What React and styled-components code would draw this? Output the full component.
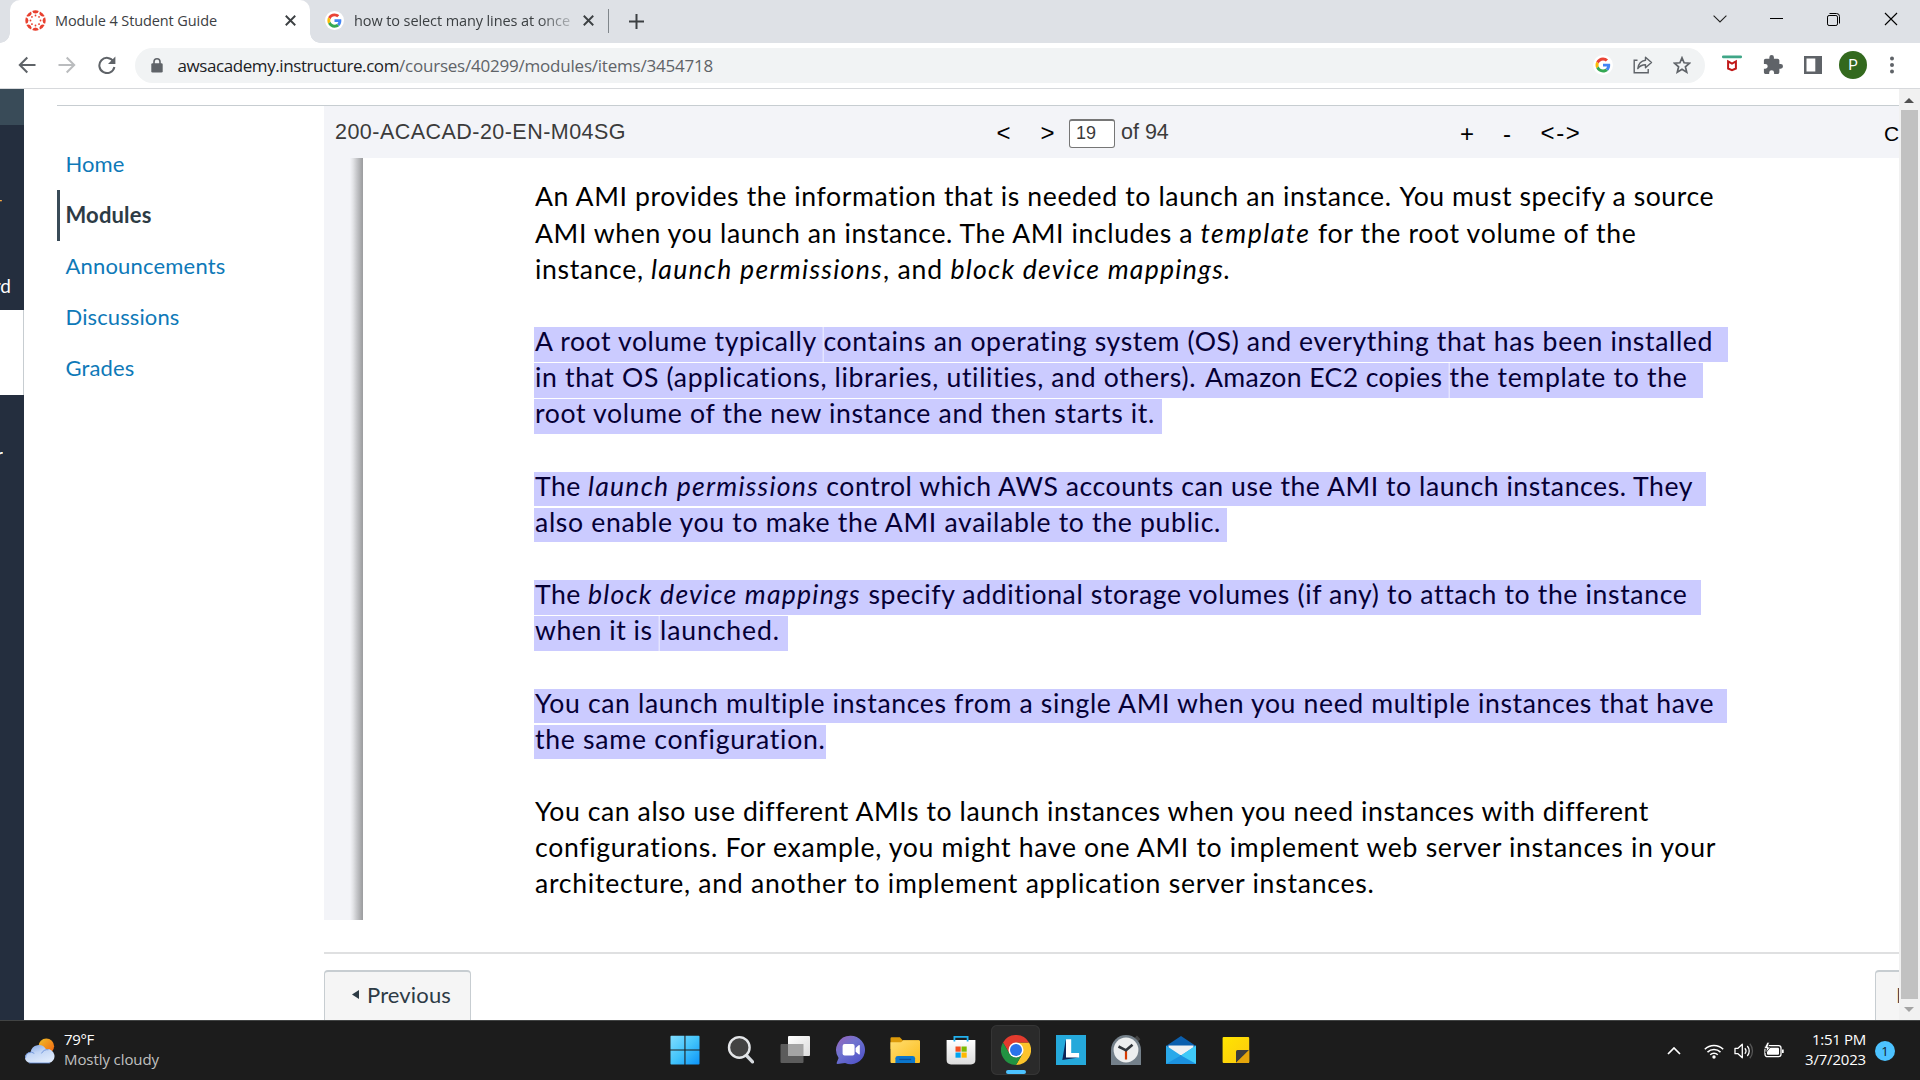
import React, { useLayoutEffect, useRef, useState } from "react";
import styled, { createGlobalStyle, css } from "styled-components";

const Global = createGlobalStyle`
  html, body { margin: 0; padding: 0; background: #fff; overflow: hidden; }
  *, *::before, *::after { box-sizing: border-box; }
  svg { display: block; flex: none; }
`;

const ui = `"Open Sans", "Noto Sans", sans-serif`;
const lato = `Lato, "Noto Sans", sans-serif`;
const arial = `"Liberation Sans", Arial, sans-serif`;

/* ---------- text tracked out to a known width ---------- */
const FitBox = styled.span`
  display: inline-block;
  flex: none;
  white-space: pre;
  width: ${(p) => p.$w}px;
`;

function Fit({ w, children }) {
  const ref = useRef(null);
  const [track, setTrack] = useState(0);
  useLayoutEffect(() => {
    const natural = ref.current.getBoundingClientRect().width;
    setTrack((w - natural) / children.length);
  }, [w, children]);
  return (
    <FitBox $w={w}>
      <span ref={ref} style={{ letterSpacing: track + "px" }}>{children}</span>
    </FitBox>
  );
}

/* ---------- shell ---------- */
const Screen = styled.div`
  width: 1920px;
  height: 1080px;
  display: grid;
  grid-template-rows: 43px 46px 931px 60px;
  overflow: hidden;
  background: #fff;
  font-family: ${ui};
`;

/* ---------- tab strip ---------- */
const TabStrip = styled.header`
  display: flex;
  background: #dee1e6;
  padding-left: 10px;
`;
const Tab = styled.div`
  display: flex;
  align-items: center;
  flex: none;
  width: ${(p) => p.$w}px;
  height: 43px;
  padding: 0 14px 2px 15px;
  background: ${(p) => (p.$active ? "#fff" : "transparent")};
  border-radius: 10px 10px 0 0;
  position: relative;
  ${(p) => p.$active && css`
    &::before, &::after {
      content: "";
      position: absolute;
      bottom: 0;
      width: 10px;
      height: 10px;
    }
    &::before { left: -10px; background: radial-gradient(circle at 0 0, transparent 9.5px, #fff 10px); }
    &::after { right: -10px; background: radial-gradient(circle at 100% 0, transparent 9.5px, #fff 10px); }
  `}
`;
const TabTitle = styled.span`
  flex: 1;
  margin-left: ${(p) => p.$gap}px;
  overflow: hidden;
  font-size: 14.5px;
  line-height: 20px;
  color: #3c4043;
  white-space: nowrap;
  ${(p) => p.$fade && css`
    flex: none;
    width: 217px;
    margin-right: 12px;
    mask-image: linear-gradient(90deg, #000 85%, rgba(0,0,0,0.25));
  `}
`;
const TabDivider = styled.div`
  width: 1px;
  height: 24px;
  margin: 9px 20px 0 0;
  background: #80868b;
`;
const NewTab = styled.div`
  display: flex;
  align-items: center;
  height: 42px;
`;
const WindowControls = styled.div`
  display: flex;
  align-items: center;
  height: 38px;
  margin-left: auto;
  padding-right: 1px;
`;
const Control = styled.div`
  display: flex;
  justify-content: center;
  width: ${(p) => p.$w}px;
`;

/* ---------- address bar ---------- */
const Toolbar = styled.div`
  display: flex;
  align-items: center;
  background: #fff;
  border-bottom: 1px solid #d7d9dc;
  padding: 0 0 1px 18px;
`;
const NavButtons = styled.div`
  display: flex;
  gap: 22px;
  width: 117px;
`;
const Omnibox = styled.div`
  display: flex;
  align-items: center;
  flex: none;
  width: 1570px;
  height: 35px;
  padding: 0 14px 0 16px;
  border-radius: 18px;
  background: #f1f3f4;
`;
const Url = styled.div`
  flex: 1;
  display: flex;
  margin-left: 14.5px;
  padding-top: 1px;
  font-size: 17px;
  line-height: 22px;
  color: #202124;
`;
const UrlPath = styled.span`
  color: #5f6368;
`;
const OmniActions = styled.div`
  display: flex;
  align-items: center;
  gap: 20px;
`;
const Extensions = styled.div`
  display: flex;
  align-items: center;
  gap: 21px;
  padding-left: 17px;
`;
const Avatar = styled.div`
  width: 28px;
  height: 28px;
  margin: 0 2px 0 -4px;
  border-radius: 50%;
  background: #33691e;
  color: #fff;
  font: 400 15px/28px Roboto, sans-serif;
  text-align: center;
`;

/* ---------- page ---------- */
const Page = styled.main`
  display: flex;
  overflow: hidden;
`;
const GlobalNav = styled.aside`
  display: flex;
  flex-direction: column;
  width: 24px;
  background: #242e3e;
  overflow: hidden;
`;
const NavLogo = styled.div`
  height: 36px;
  background: #394b58;
`;
const NavSlot = styled.div`
  display: flex;
  justify-content: flex-end;
  width: ${(p) => p.$w}px;
  height: ${(p) => p.$h}px;
  padding-top: ${(p) => p.$top}px;
  overflow: hidden;
  color: ${(p) => p.$color || "#fff"};
  font: 400 19px/24px ${lato};
  white-space: nowrap;
`;
const NavCurrent = styled.div`
  height: 85px;
  background: #fff;
  border-right: 1px solid #c7cdd1;
`;
const Content = styled.div`
  display: flex;
  flex: none;
  width: 1842px;
  margin: 16px 0 0 33px;
  border-top: 1px solid #c7cdd1;
  overflow: hidden;
`;
const CourseMenu = styled.nav`
  display: flex;
  flex-direction: column;
  width: 267px;
  flex: none;
  padding-top: 33px;
`;
const CourseLink = styled.a`
  display: flex;
  align-items: center;
  height: 51px;
  padding: 0 0 2px ${(p) => (p.$active ? 5.5 : 8.5)}px;
  border-left: ${(p) => (p.$active ? "3px solid #394b58" : "0")};
  color: ${(p) => (p.$active ? "#2d3b45" : "#0e79b8")};
  font: ${(p) => (p.$active ? 700 : 400)} 22px/30px ${lato};
`;
const Viewer = styled.section`
  display: flex;
  flex-direction: column;
  width: 1575px;
  flex: none;
`;
const ViewerBar = styled.div`
  display: flex;
  align-items: center;
  flex: none;
  height: 52px;
  padding: 0 0 0 11px;
  background: #f3f4f8;
  color: #3b3b3b;
  font: 400 21.5px/28px ${arial};
  overflow: hidden;
`;
const DocName = styled.div`
  flex: none;
  width: 661.5px;
  padding-bottom: 1px;
`;
const BarKey = styled.button`
  flex: none;
  width: ${(p) => p.$w}px;
  padding: ${(p) => p.$down || 0}px 0 0;
  border: 0;
  background: none;
  color: #000;
  font: 400 ${(p) => p.$size || 24}px/28px ${arial};
  text-align: left;
  white-space: nowrap;
`;
const PageInput = styled.div`
  flex: none;
  width: 46px;
  height: 29px;
  margin: 3px 6px 0 0;
  padding: 0 0 0 6px;
  border: 1px solid #767676;
  border-top-width: 2px;
  border-radius: 3px;
  background: #fff;
  font: 400 18px/24px ${arial};
`;
const PageCount = styled.div`
  flex: none;
  width: 339px;
  padding-bottom: 1px;
`;
const Sheet = styled.div`
  display: flex;
  flex: none;
  height: 762px;
`;
const SheetGutter = styled.div`
  width: 39px;
  flex: none;
  background: linear-gradient(90deg, #f3f4f8 26px, #e3e4e7 29px, #c4c5c8 33px, #a0a1a3 38px, #9c9da0);
`;
const Lines = styled.div`
  display: flex;
  flex-direction: column;
  padding: 24.4px 0 0 172px;
  font: 400 26.6px/36.16px ${lato};
  color: #000;
`;
const Line = styled.div`
  display: flex;
  height: 36.16px;
  flex: none;
`;
const Segment = styled.span`
  display: block;
  flex: none;
  height: 34.5px;
  line-height: 29.5px;
  font-style: ${(p) => (p.$italic ? "italic" : "normal")};
  ${(p) => p.$marked && css`
    background: #cbcbff;
    color: #060035;
    padding-right: ${p.$pad || 0}px;
    ${p.$first ? "margin-left: -1px; padding-left: 1px;" : ""}
    ${p.$cut ? "box-shadow: -1.5px 0 0 #e4e4ff;" : ""}
  `}
`;
const PagerRow = styled.div`
  display: flex;
  flex: none;
  justify-content: space-between;
  margin-top: 32px;
  padding-top: 16px;
  border-top: 2px solid #dfe0e1;
`;
const PagerButton = styled.a`
  display: flex;
  align-items: center;
  flex: none;
  gap: 8px;
  width: ${(p) => p.$w}px;
  height: 60px;
  padding: 0 0 12px ${(p) => p.$pl}px;
  overflow: hidden;
  background: #f5f5f5;
  border: 1px solid #c7cdd1;
  border-top-width: 2px;
  border-right-width: ${(p) => (p.$clipped ? 0 : 1)}px;
  border-radius: 4px ${(p) => (p.$clipped ? 0 : 4)}px 0 0;
  color: #2d3b45;
  font: 400 22px/30px ${lato};
`;
const Scrollbar = styled.div`
  display: flex;
  flex-direction: column;
  align-items: center;
  flex: none;
  width: 21px;
  background: #f1f1f1;
  padding: 9px 1px 8px 0;
`;
const Thumb = styled.div`
  width: 17px;
  height: 889px;
  margin: 7px 0 8px;
  background: #c1c1c1;
`;

/* ---------- taskbar ---------- */
const Taskbar = styled.footer`
  display: grid;
  grid-template-columns: 657px 607px 1fr;
  background: #1c1c1c;
  border-top: 1px solid #414343;
`;
const Weather = styled.div`
  display: flex;
  align-items: center;
  gap: 9px;
  padding-left: 25px;
`;
const TwoLines = styled.div`
  display: flex;
  flex-direction: column;
  align-items: ${(p) => (p.$right ? "flex-end" : "flex-start")};
  padding-bottom: 4px;
  color: #fff;
  font-size: 15px;
  line-height: 20px;
`;
const Dim = styled.span`
  color: #c0c0c0;
`;
const Apps = styled.div`
  display: flex;
  padding-top: 4px;
`;
const AppCell = styled.div`
  display: flex;
  justify-content: center;
  align-items: center;
  position: relative;
  width: 49px;
  height: 50px;
  margin: 0 3.1px;
  border-radius: 6px;
  ${(p) => p.$active && css`
    background: #2a2a2a;
    box-shadow: inset 0 0 0 1px #353535;
    &::after {
      content: "";
      position: absolute;
      left: 15px;
      bottom: 1px;
      width: 20px;
      height: 4px;
      border-radius: 2px;
      background: #4cc2ff;
    }
  `}
`;
const Tray = styled.div`
  display: flex;
  align-items: center;
  justify-content: flex-end;
  padding: 0 25px 0 0;
`;
const TrayIcons = styled.div`
  display: flex;
  align-items: center;
  gap: 10px;
  margin: 0 21px 0 23px;
`;
const Badge = styled.div`
  width: 20px;
  height: 20px;
  margin-left: 9px;
  border-radius: 50%;
  background: #4cc2ff;
  color: #10202b;
  font: 400 13px/20px ${ui};
  text-align: center;
`;

/* ---------- icons ---------- */
const GoogleG = ({ s = 20 }) => (
  <svg width={s} height={s} viewBox="0 0 64 64">
    <circle cx="32" cy="32" r="32" fill="#fff" />
    <g transform="translate(8 8)">
      <path fill="#EA4335" d="M24 9.5c3.54 0 6.71 1.22 9.21 3.6l6.85-6.85C35.9 2.38 30.47 0 24 0 14.62 0 6.51 5.38 2.56 13.22l7.98 6.19C12.43 13.72 17.74 9.5 24 9.5z" />
      <path fill="#4285F4" d="M46.98 24.55c0-1.57-.15-3.09-.38-4.55H24v9.02h12.94c-.58 2.96-2.26 5.48-4.78 7.18l7.73 6c4.51-4.18 7.09-10.36 7.09-17.65z" />
      <path fill="#FBBC05" d="M10.53 28.59c-.48-1.45-.76-2.99-.76-4.59s.27-3.14.76-4.59l-7.98-6.19C.92 16.46 0 20.12 0 24c0 3.88.92 7.54 2.56 10.78l7.97-6.19z" />
      <path fill="#34A853" d="M24 48c6.48 0 11.93-2.13 15.89-5.81l-7.73-6c-2.15 1.45-4.92 2.3-8.16 2.3-6.26 0-11.57-4.22-13.47-9.91l-7.98 6.19C6.51 42.62 14.62 48 24 48z" />
    </g>
  </svg>
);
const CanvasLogo = () => (
  <svg width="21" height="21" viewBox="-10.5 -10.5 21 21">
    {[0, 45, 90, 135, 180, 225, 270, 315].map((a) => (
      <g key={a} transform={`rotate(${a})`} fill="#e8402f">
        <path d="M-3.3 -9.6 A10.2 10.2 0 0 1 3.3 -9.6 A3.4 3.4 0 0 1 -3.3 -9.6z" />
        <circle cx="0" cy="-5" r="0.9" />
      </g>
    ))}
  </svg>
);
const Cross = ({ s, sw, c = "#3c4043" }) => (
  <svg width={s} height={s} viewBox="0 0 10 10">
    <path d="M.7 .7 9.3 9.3M9.3 .7 .7 9.3" stroke={c} strokeWidth={sw} fill="none" />
  </svg>
);
const Arrow = ({ c, flip }) => (
  <svg width="18" height="18" viewBox="0 0 18 18">
    <path transform={flip ? "matrix(-1 0 0 1 18 0)" : undefined} d="M17.5 9H2M9.3 1.5 1.8 9l7.5 7.5" stroke={c} strokeWidth="2" fill="none" />
  </svg>
);
const Reload = () => (
  <svg width="18" height="18" viewBox="0 0 18 18">
    <path d="M15.5 5.6A7.6 7.6 0 1 0 16.4 11" stroke="#5f6368" strokeWidth="2" fill="none" />
    <path d="M17.4 .6V8H10z" fill="#5f6368" />
  </svg>
);
const Lock = () => (
  <svg width="12" height="15" viewBox="0 0 12 15">
    <path d="M3 6V3.8a3 3 0 0 1 6 0V6" stroke="#5f6368" strokeWidth="1.6" fill="none" />
    <rect x="0.3" y="5.3" width="11.4" height="9.2" rx="1.3" fill="#5f6368" />
  </svg>
);
const Share = () => (
  <svg width="20" height="18" viewBox="0 0 20 18" fill="none" stroke="#5f6368" strokeWidth="1.4">
    <path d="M4.5 4.2H1.2v12.6h14V13" />
    <path d="M12.5 1.2 18.5 6.5l-6 5.2V8.7C9 8.7 6.6 10 4.8 12.6 5.4 8 8 4.9 12.5 4.3z" strokeLinejoin="round" />
  </svg>
);
const Star = () => (
  <svg width="18" height="18" viewBox="0 0 18 18">
    <path d="M9 1.8l2.1 5 5.4.4-4.1 3.6 1.3 5.3L9 13.2l-4.7 2.9 1.3-5.3L1.5 7.2l5.4-.4z" fill="none" stroke="#5f6368" strokeWidth="1.7" />
  </svg>
);
const McAfee = () => (
  <svg width="20" height="20" viewBox="0 0 20 20">
    <rect x="0" y="0.4" width="20" height="2.8" rx="1.2" fill="#3fa687" />
    <path d="M6.1 6.4 10 8.7l3.9-2.3v7.1L10 15.2l-3.9-1.7z" fill="none" stroke="#c01818" strokeWidth="2" />
  </svg>
);
const Puzzle = () => (
  <svg width="20" height="20" viewBox="1 1 22 22">
    <path fill="#5f6368" d="M20.5 11H19V7c0-1.1-.9-2-2-2h-4V3.5a2.5 2.5 0 0 0-5 0V5H4c-1.1 0-2 .9-2 2v3.8h1.5a2.7 2.7 0 0 1 0 5.4H2V20c0 1.1.9 2 2 2h3.8v-1.5a2.7 2.7 0 0 1 5.4 0V22H17c1.1 0 2-.9 2-2v-4h1.5a2.5 2.5 0 0 0 0-5z" />
  </svg>
);
const SidePanel = () => (
  <svg width="18" height="18" viewBox="0 0 18 18">
    <path fill="#5f6368" fillRule="evenodd" d="M0 0h18v18H0zM2.5 2.5v13h8.8v-13z" />
  </svg>
);
const Dots = () => (
  <svg width="4" height="18" viewBox="0 0 4 18" fill="#5f6368">
    <circle cx="2" cy="2.4" r="2" /><circle cx="2" cy="9" r="2" /><circle cx="2" cy="15.4" r="2" />
  </svg>
);
const Triangle = ({ d, c, w = 10, h = 6 }) => (
  <svg width={w} height={h} viewBox={`0 0 ${w} ${h}`}><path d={d} fill={c} /></svg>
);

const WeatherIcon = () => (
  <svg width="30" height="26" viewBox="0 0 30 26">
    <defs>
      <linearGradient id="sun" x1="0" y1="0" x2="1" y2="1"><stop offset="0" stopColor="#efc029" /><stop offset="1" stopColor="#f2600e" /></linearGradient>
      <linearGradient id="cloud" x1="0" y1="0" x2="0.5" y2="1"><stop offset="0" stopColor="#7ba0e2" /><stop offset="0.5" stopColor="#c3d6f5" /><stop offset="1" stopColor="#dde9fb" /></linearGradient>
    </defs>
    <circle cx="21.3" cy="8.2" r="7.8" fill="url(#sun)" />
    <path d="M5.4 25A5.4 5.4 0 0 1 5.6 14 8.3 8.3 0 0 1 21 11.3 7 7 0 0 1 24 25z" fill="url(#cloud)" />
    <path d="M.5 20a5.4 5.4 0 0 1 8.8-4.6M16.5 15.4a7 7 0 0 1 7-3.7M4 25h21" stroke="#5f88d4" strokeWidth=".8" fill="none" />
  </svg>
);
const WindowsIcon = () => (
  <svg width="30" height="30" viewBox="0 0 30 30">
    <defs><linearGradient id="win" gradientUnits="userSpaceOnUse" x1="0" y1="0" x2="30" y2="30"><stop offset="0" stopColor="#84deff" /><stop offset=".5" stopColor="#43c4fb" /><stop offset="1" stopColor="#0a92f8" /></linearGradient></defs>
    <path fill="url(#win)" d="M.5 1.5q0-.8.8-.8H14.4V14.5H.5zM15.5.7H28.7q.8 0 .8.8V14.5h-14zM.5 15.6H14.4V29.5H1.3q-.8 0-.8-.8zM15.5 15.6h14V28.7q0 .8-.8.8H15.5z" />
  </svg>
);
const SearchIcon = () => (
  <svg width="28" height="30" viewBox="-1 0 28 30">
    <path d="M19 20 25.5 26.8" stroke="#d6dade" strokeWidth="3.4" strokeLinecap="round" />
    <circle cx="12.3" cy="12.4" r="10.3" fill="#434343" stroke="#e4e6e8" strokeWidth="2.4" />
  </svg>
);
const TaskViewIcon = () => (
  <svg width="30" height="30" viewBox="-1 0 30 30">
    <defs><linearGradient id="tv" x1="0" y1="0" x2="1" y2="1"><stop offset="0" stopColor="#fff" /><stop offset="1" stopColor="#dcdcdc" /></linearGradient></defs>
    <rect x="-.5" y="9" width="23" height="19" rx="1" fill="#5c5c5c" />
    <rect x="7" y="1" width="22" height="20" rx="1" fill="url(#tv)" />
    <rect x="7" y="9" width="15.5" height="12" fill="#a4a4a4" />
  </svg>
);
const ChatIcon = () => (
  <svg width="30" height="30" viewBox="-.6 0 30 30">
    <defs><linearGradient id="chat" x1="0" y1="0" x2=".8" y2="1"><stop offset="0" stopColor="#9a62b8" /><stop offset=".45" stopColor="#6f73cf" /><stop offset="1" stopColor="#4f52c8" /></linearGradient></defs>
    <path fill="url(#chat)" d="M15 .8A14.2 14.2 0 1 1 9.5 28L2 29q-1.3 0-.9-1.2L3 23A14.2 14.2 0 0 1 15 .8z" />
    <rect x="7" y="9" width="12" height="11.5" rx="2" fill="#fff" />
    <path d="M20 13l3-2.8q1.2-.6 1.2.6v8q0 1.2-1.2.4L20 16.8z" fill="#fff" />
  </svg>
);
const FolderIcon = () => (
  <svg width="30" height="30" viewBox="-.5 0 30.5 30">
    <defs><linearGradient id="fold" x1="0" y1="0" x2="1" y2="1"><stop offset="0" stopColor="#ffdd71" /><stop offset="1" stopColor="#fcbd1c" /></linearGradient></defs>
    <path d="M0 3.2Q0 2 1.2 2H9.5l2.8 3H29v9H0z" fill="#dd9a0a" />
    <path d="M0 7.2 10.8 7 13 5H29q1 0 1 1V27.2q0 1-1 1H1q-1 0-1-1z" fill="url(#fold)" />
    <path d="M5 28.2V23.5Q5 21 7.5 21h15q2.5 0 2.5 2.5v4.7z" fill="#0b76cc" />
    <path d="M9 24.6h12" stroke="#084f9b" strokeWidth="1.3" />
  </svg>
);
const StoreIcon = () => (
  <svg width="30" height="30" viewBox="0 0 30 30">
    <defs><linearGradient id="st" x1="0" y1="0" x2="0" y2="1"><stop offset="0" stopColor="#fff" /><stop offset="1" stopColor="#dcdcdc" /></linearGradient></defs>
    <path d="M.6 5h28.8v20q0 4.4-4.4 4.4H5Q.6 29.4 .6 25z" fill="url(#st)" />
    <path d="M8.4 6.5V1.8h13.2V6.5" stroke="#22b1ee" strokeWidth="1.8" fill="none" />
    <path d="M9.5 11.5h5.2v5.2H9.5z" fill="#f25022" /><path d="M15.5 11.5h5.2v5.2h-5.2z" fill="#7fba00" />
    <path d="M9.5 17.5h5.2v5.2H9.5z" fill="#00a4ef" /><path d="M15.5 17.5h5.2v5.2h-5.2z" fill="#ffb900" />
  </svg>
);
const ChromeIcon = () => (
  <svg width="30" height="30" viewBox="0 0 48 48">
    <path d="M44.8 12H24l10.4 18L24 48A24 24 0 0 0 44.8 12z" fill="#fcc42b" />
    <path d="M3.2 12 13.6 30 24 24V12H44.8A24 24 0 0 0 3.2 12z" fill="#e33b2e" />
    <path d="M3.2 12A24 24 0 0 0 24 48L34.4 30A12 12 0 0 1 13.6 30z" fill="#229342" />
    <circle cx="24" cy="24" r="12" fill="#fff" />
    <circle cx="24" cy="24" r="9.6" fill="#2a73ea" />
  </svg>
);
const LockdownIcon = () => (
  <svg width="30" height="30" viewBox="0 0 30 30">
    <path d="M0 0h30v30H0z" fill="#25a9db" />
    <path d="M9.8 4.5 6.3 25l16.5-2.5L12 21z" fill="#0b2458" />
    <path d="M10 4.3h5.2V18h7.9v4.6H10z" fill="#fff" />
  </svg>
);
const ClockIcon = () => (
  <svg width="30" height="30" viewBox="0 0 30 30">
    <path d="M23 3.5 26 .6l3.4 3.6-3 3z" fill="#434343" />
    <path d="M0 15a15 15 0 0 1 30 0v15H0z" fill="#74808a" />
    <circle cx="15" cy="15" r="12.4" fill="#eceeef" />
    <path d="M15 15.5v9" stroke="#d83b01" strokeWidth="2.2" />
    <path d="M7.5 11.5 15 15.3l6.5-5.6" stroke="#30353a" strokeWidth="2.6" fill="none" />
  </svg>
);
const MailIcon = () => (
  <svg width="30" height="30" viewBox="0 0 30 30">
    <path d="M0 11 15 1l15 10v6H0z" fill="#0b5fae" />
    <path d="M2.5 10.5h25V20h-25z" fill="#eff1f3" />
    <path d="M0 10.5 15 20.5 30 10.5V28.4q0 .6-.6.6H.6Q0 29 0 28.4z" fill="#2aa9ea" />
    <path d="M15 20.5 30 10.5V28.8z" fill="#3fcaf8" />
    <path d="M0 29 14.8 20.4 30 29z" fill="#1c92e0" />
  </svg>
);
const StickyIcon = () => (
  <svg width="28" height="30" viewBox="0 0 28 30">
    <defs><linearGradient id="nt" x1="0" y1="0" x2="1" y2="1"><stop offset="0" stopColor="#ffe500" /><stop offset="1" stopColor="#fcc80f" /></linearGradient></defs>
    <rect x=".6" y="2" width="26.6" height="26" rx="1" fill="url(#nt)" />
    <path d="M14 28V16.5q0-1.5 1.5-1.5H27.2z" fill="#3c3c3c" />
    <path d="M14 28 27.2 15V27q0 1-1 1z" fill="#e5a50b" />
  </svg>
);
const Wifi = () => (
  <svg width="20" height="16" viewBox="0 0 20 16" fill="none" stroke="#fff" strokeWidth="1.5">
    <path d="M.8 6.3a13 13 0 0 1 18.4 0M3.5 9.1a9.2 9.2 0 0 1 13 0M6.2 11.8a5.4 5.4 0 0 1 7.6 0" />
    <circle cx="10" cy="14" r="1.7" fill="#fff" stroke="none" />
  </svg>
);
const Volume = () => (
  <svg width="20" height="18" viewBox="0 0 20 18" fill="none" stroke="#fff" strokeWidth="1.3">
    <path d="M1 6.3h3L8.3 2.2v13.6L4 11.7H1z" strokeLinejoin="round" />
    <path d="M10.8 6.3a4 4 0 0 1 0 5.4M13.3 4a7.5 7.5 0 0 1 0 10" />
    <path d="M15.8 1.8a11 11 0 0 1 0 14.4" stroke="#555" />
  </svg>
);
const Battery = () => (
  <svg width="20" height="18" viewBox="0 0 20 18">
    <rect x="1" y="3.7" width="16" height="11" rx="2.4" fill="none" stroke="#fff" strokeWidth="1.3" />
    <rect x="3" y="5.7" width="12" height="7" rx="1" fill="#fff" />
    <path d="M18 7.4h1.7v3.6H18z" fill="#fff" />
    <path d="M3.2.3 0 6.6h2.6L1.6 11 6.5 5H3.9L5.5.3z" fill="#fff" stroke="#1c1c1c" strokeWidth=".8" />
  </svg>
);

/* ---------- data ---------- */
const seg = (t, w, o = {}) => ({ t, w, ...o });
const I = { italic: true };
const M = { marked: true };
const lines = [
  [seg("An AMI provides the information that is needed to launch an instance. ", 864.5), seg("You must specify a source", 314.5)],
  [seg("AMI when you launch an instance. The AMI includes a ", 665.5), seg("template", 110, I), seg(" for the root volume of the", 326)],
  [seg("instance, ", 116), seg("launch permissions", 232, I), seg(", and ", 67.5), seg("block device mappings.", 281, I)],
  [],
  [seg("A root volume typically ", 288.5, M), seg("contains an operating system (OS) and everything that has been installed", 890, { ...M, cut: true, pad: 14 })],
  [seg("in that OS (applications, libraries, utilities, and others). ", 670, M), seg("Amazon EC2 copies ", 244.5, M), seg("the template to the", 238, { ...M, cut: true, pad: 15 })],
  [seg("root volume of the new instance and then starts it.", 620, { ...M, pad: 7 })],
  [],
  [seg("The ", 53, M), seg("launch permissions", 231, { ...M, ...I }), seg(" control which AWS accounts can use the AMI to launch instances. They", 874, { ...M, pad: 13 })],
  [seg("also enable you to make the AMI available to the public.", 686, { ...M, pad: 6 })],
  [],
  [seg("The ", 53, M), seg("block device mappings", 273, { ...M, ...I }), seg(" specify additional storage volumes (if any) to attach to the instance", 826, { ...M, pad: 14 })],
  [seg("when it is ", 125, M), seg("launched.", 120, { ...M, cut: true, pad: 8 })],
  [],
  [seg("You can launch multiple instances from a single AMI when you need multiple instances that have", 1180, { ...M, pad: 12 })],
  [seg("the same configuration.", 290.5, { ...M })],
  [],
  [seg("You can also use different AMIs to launch instances when you need instances with different", 1112)],
  [seg("configurations. For example, you might have one AMI to implement web server instances in your", 1181)],
  [seg("architecture, and another to implement application server instances.", 840)],
];

const menu = [["Home", 59], ["Modules", 86], ["Announcements", 160], ["Discussions", 114], ["Grades", 69]];
const apps = [WindowsIcon, SearchIcon, TaskViewIcon, ChatIcon, FolderIcon, StoreIcon, ChromeIcon, LockdownIcon, ClockIcon, MailIcon, StickyIcon];

export default function App() {
  return (
    <Screen>
      <Global />
      <TabStrip>
        <Tab $active $w={300}>
          <CanvasLogo />
          <TabTitle $gap={9}><Fit w={162}>Module 4 Student Guide</Fit></TabTitle>
          <Cross s={11} sw={1.7} />
        </Tab>
        <Tab $w={298}>
          <GoogleG s={19} />
          <TabTitle $gap={10} $fade><Fit w={216}>how to select many lines at once</Fit></TabTitle>
          <Cross s={11} sw={1.7} />
        </Tab>
        <TabDivider />
        <NewTab>
          <svg width="15" height="15" viewBox="0 0 15 15"><path d="M7.5 0v15M0 7.5h15" stroke="#3c4043" strokeWidth="2" /></svg>
        </NewTab>
        <WindowControls>
          <Control $w={57}><svg width="14" height="8" viewBox="0 0 14 8"><path d="M.6.6 7 7 13.4.6" stroke="#222" fill="none" strokeWidth="1.1" /></svg></Control>
          <Control $w={57}><svg width="13" height="2" viewBox="0 0 13 2"><path d="M0 .5h13" stroke="#000" /></svg></Control>
          <Control $w={57}>
            <svg width="13" height="13" viewBox="0 0 13 13" fill="none" stroke="#000"><rect x=".5" y="2.5" width="10" height="10" rx="1.6" /><path d="M2.5.5H9.5q3 0 3 3v7" /></svg>
          </Control>
          <Control $w={57}><Cross s={14} sw={0.8} c="#000" /></Control>
        </WindowControls>
      </TabStrip>

      <Toolbar>
        <NavButtons>
          <Arrow c="#5f6368" />
          <Arrow c="#babcbe" flip />
          <Reload />
        </NavButtons>
        <Omnibox>
          <Lock />
          <Url>
            <Fit w={221.5}>awsacademy.instructure.com</Fit>
            <UrlPath><Fit w={314}>/courses/40299/modules/items/3454718</Fit></UrlPath>
          </Url>
          <OmniActions>
            <GoogleG s={20} />
            <Share />
            <Star />
          </OmniActions>
        </Omnibox>
        <Extensions>
          <McAfee />
          <Puzzle />
          <SidePanel />
          <Avatar>P</Avatar>
          <Dots />
        </Extensions>
      </Toolbar>

      <Page>
        <GlobalNav>
          <NavLogo />
          <NavSlot $w={2} $h={80} $top={66} $color="#f0b545">t</NavSlot>
          <NavSlot $w={11} $h={105} $top={69}>rd</NavSlot>
          <NavCurrent />
          <NavSlot $w={3} $h={100} $top={48}>r</NavSlot>
        </GlobalNav>
        <Content>
          <CourseMenu>
            {menu.map(([name, w]) => (
              <CourseLink key={name} $active={name === "Modules"}><Fit w={w}>{name}</Fit></CourseLink>
            ))}
          </CourseMenu>
          <Viewer>
            <ViewerBar>
              <DocName><Fit w={291}>200-ACACAD-20-EN-M04SG</Fit></DocName>
              <BarKey $w={44} $down={1}>&lt;</BarKey>
              <BarKey $w={28.5} $down={1}>&gt;</BarKey>
              <PageInput>19</PageInput>
              <PageCount>of 94</PageCount>
              <BarKey $w={43} $down={3}>+</BarKey>
              <BarKey $w={37.5} $down={3}>-</BarKey>
              <BarKey $w={343.5} $down={1}><Fit w={41}>{"<->"}</Fit></BarKey>
              <BarKey $w={60} $size={21} $down={3}>Close</BarKey>
            </ViewerBar>
            <Sheet>
              <SheetGutter />
              <Lines>
                {lines.map((line, i) => (
                  <Line key={i}>
                    {line.map((s, j) => (
                      <Segment key={j} $italic={s.italic} $marked={s.marked} $pad={s.pad} $cut={s.cut} $first={j === 0}>
                        <Fit w={s.w}>{s.t}</Fit>
                      </Segment>
                    ))}
                  </Line>
                ))}
              </Lines>
            </Sheet>
            <PagerRow>
              <PagerButton $w={147} $pl={27}>
                <Triangle d="M7 0v9L0 4.5z" c="#2d3b45" w={7} h={9} />
                <Fit w={84}>Previous</Fit>
              </PagerButton>
              <PagerButton $w={24} $pl={20} $clipped>Next</PagerButton>
            </PagerRow>
          </Viewer>
        </Content>
        <Scrollbar>
          <Triangle d="M5 0 10 5H0z" c="#505050" h={5} />
          <Thumb />
          <Triangle d="M0 0h10L5 5z" c="#a3a3a3" h={5} />
        </Scrollbar>
      </Page>

      <Taskbar>
        <Weather>
          <WeatherIcon />
          <TwoLines>
            <Fit w={30}>79°F</Fit>
            <Dim><Fit w={95}>Mostly cloudy</Fit></Dim>
          </TwoLines>
        </Weather>
        <Apps>
          {apps.map((Icon, i) => (
            <AppCell key={i} $active={i === 6}><Icon /></AppCell>
          ))}
        </Apps>
        <Tray>
          <svg width="14" height="8" viewBox="0 0 14 8"><path d="M1 7 7 1l6 6" stroke="#fff" strokeWidth="1.7" fill="none" /></svg>
          <TrayIcons><Wifi /><Volume /><Battery /></TrayIcons>
          <TwoLines $right>
            <Fit w={54}>1:51 PM</Fit>
            <Fit w={61}>3/7/2023</Fit>
          </TwoLines>
          <Badge>1</Badge>
        </Tray>
      </Taskbar>
    </Screen>
  );
}
